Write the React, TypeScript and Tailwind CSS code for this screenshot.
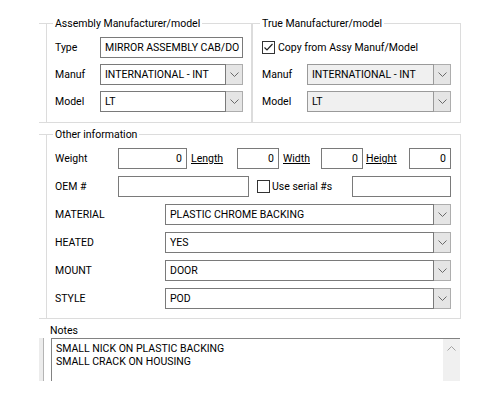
import { ReactNode } from "react";

const edge = "bg-[#dcdcdc]";

interface GroupBoxProps {
  title: string;
  lead: string; // width class of the line piece before the title
  className?: string;
  bodyClass?: string;
  children: ReactNode;
}

// Windows-style group box: thin etched frame with the caption sitting on the top edge
const GroupBox = ({ title, lead, className = "", bodyClass = "", children }: GroupBoxProps) => (
  <div className={`flex flex-col ${className}`}>
    <div className="flex items-center h-px">
      <span className={`${lead} h-px ${edge}`} />
      <span className="px-[2px] leading-[13px] whitespace-nowrap">{title}</span>
      <span className={`flex-1 h-px ${edge}`} />
    </div>
    <div className={`border-l border-r border-[#dcdcdc] ${bodyClass}`}>{children}</div>
    <div className={`h-px ${edge}`} />
  </div>
);

const Chevron = ({ up = false, color = "#6a6a6a" }: { up?: boolean; color?: string }) => (
  <svg width="9" height="5" viewBox="0 0 9 5" className={up ? "rotate-180" : ""}>
    <path d="M0.5 0.5 L4.5 4.5 L8.5 0.5" fill="none" stroke={color} strokeWidth="1" />
  </svg>
);

const Combo = ({ value, disabled = false, className = "" }: { value: string; disabled?: boolean; className?: string }) => (
  <div className={`flex h-[21px] ${className}`}>
    <div
      className={`flex-1 min-w-0 flex items-center pl-[4px] border overflow-hidden whitespace-nowrap ${
        disabled ? "bg-[#f0f0f0] border-[#9a9a9a]" : "bg-white border-[#7a7a7a]"
      }`}
    >
      {value}
    </div>
    <div className="w-[17px] shrink-0 flex items-center justify-center bg-[#e5e5e5] border-y border-r border-[#adadad]">
      <Chevron />
    </div>
  </div>
);

const TextBox = ({ value = "", right = false, className = "" }: { value?: string; right?: boolean; className?: string }) => (
  <div
    className={`h-[21px] shrink-0 flex items-center border border-[#7a7a7a] bg-white overflow-hidden whitespace-nowrap ${
      right ? "justify-end pr-[4px]" : "pl-[4px]"
    } ${className}`}
  >
    {value}
  </div>
);

const CheckBox = ({ checked = false }: { checked?: boolean }) => (
  <span className="w-[13px] h-[13px] shrink-0 border border-[#333333] bg-white flex items-center justify-center">
    {checked && (
      <svg width="11" height="11" viewBox="0 0 11 11">
        <path d="M1.5 5.5 L4 8 L9.5 2" fill="none" stroke="#222222" strokeWidth="1.2" />
      </svg>
    )}
  </span>
);

const Row = ({ children }: { children: ReactNode }) => <div className="flex items-center h-[21px]">{children}</div>;

const details = [
  { label: "MATERIAL", value: "PLASTIC CHROME BACKING" },
  { label: "HEATED", value: "YES" },
  { label: "MOUNT", value: "DOOR" },
  { label: "STYLE", value: "POD" },
];

export default function App() {
  return (
    <div className="w-[500px] h-[400px] bg-white overflow-hidden text-black text-[10.5px] leading-[13px] font-['Roboto','Liberation_Sans',sans-serif] pt-[23px] pl-[39px]">
      <div className="flex w-[422px]">
        <GroupBox title="Assembly Manufacturer/model" lead="w-[14px]" className="w-[213px]" bodyClass="ml-[7px] h-[98px]">
          <div className="flex flex-col gap-[6px] pt-[13px] pl-[8px] pr-[8px]">
            <Row>
              <span className="w-[45px]">Type</span>
              <TextBox value="MIRROR ASSEMBLY CAB/DO" className="flex-1" />
            </Row>
            <Row>
              <span className="w-[45px]">Manuf</span>
              <Combo value="INTERNATIONAL - INT" className="flex-1" />
            </Row>
            <Row>
              <span className="w-[45px]">Model</span>
              <Combo value="LT" className="flex-1" />
            </Row>
          </div>
        </GroupBox>

        <GroupBox title="True Manufacturer/model" lead="w-[8px]" className="w-[209px]" bodyClass="h-[98px]">
          <div className="flex flex-col gap-[6px] pt-[13px] pl-[9px] pr-[9px]">
            <Row>
              <CheckBox checked />
              <span className="ml-[3px]">Copy from Assy Manuf/Model</span>
            </Row>
            <Row>
              <span className="w-[45px]">Manuf</span>
              <Combo value="INTERNATIONAL - INT" disabled className="flex-1" />
            </Row>
            <Row>
              <span className="w-[45px]">Model</span>
              <Combo value="LT" disabled className="flex-1" />
            </Row>
          </div>
        </GroupBox>
      </div>

      <GroupBox title="Other information" lead="w-[14px]" className="w-[422px] mt-[11px]" bodyClass="ml-[7px] h-[183px]">
        <div className="flex flex-col gap-[7px] pt-[13px] pl-[8px] pr-[9px]">
          <Row>
            <span className="w-[63px]">Weight</span>
            <TextBox value="0" right className="w-[69px] h-[20px]" />
            <span className="w-[50px] pl-[4px] underline">Length</span>
            <TextBox value="0" right className="w-[42px] h-[20px]" />
            <span className="w-[42px] pl-[4px] underline">Width</span>
            <TextBox value="0" right className="w-[42px] h-[20px]" />
            <span className="w-[46px] pl-[3px] underline">Height</span>
            <TextBox value="0" right className="w-[42px] h-[20px]" />
          </Row>
          <Row>
            <span className="w-[63px]">OEM #</span>
            <TextBox className="w-[131px] h-[20px]" />
            <span className="ml-[8px]">
              <CheckBox />
            </span>
            <span className="ml-[2px]">Use serial #s</span>
            <TextBox className="w-[99px] h-[20px] ml-auto" />
          </Row>
          {details.map((d) => (
            <Row key={d.label}>
              <span className="w-[110px]">{d.label}</span>
              <Combo value={d.value} className="flex-1" />
            </Row>
          ))}
        </div>
      </GroupBox>

      <div className="ml-[11px] mt-[5px] h-[13px]">Notes</div>
      <div className="flex mt-[1px] h-[43px]">
        <span className="w-[5px] bg-[#ececec] border-r border-[#b4b4b4]" />
        <div className="ml-[7px] w-[409px] flex border-t border-l border-[#828282] overflow-hidden">
          <div className="flex-1 pl-[4px] pt-[3px] whitespace-pre-line">
            {"SMALL NICK ON PLASTIC BACKING\nSMALL CRACK ON HOUSING"}
          </div>
          <div className="w-[17px] bg-[#f0f0f0] flex justify-center pt-[7px]">
            <Chevron up color="#a3a3a3" />
          </div>
        </div>
      </div>
    </div>
  );
}
